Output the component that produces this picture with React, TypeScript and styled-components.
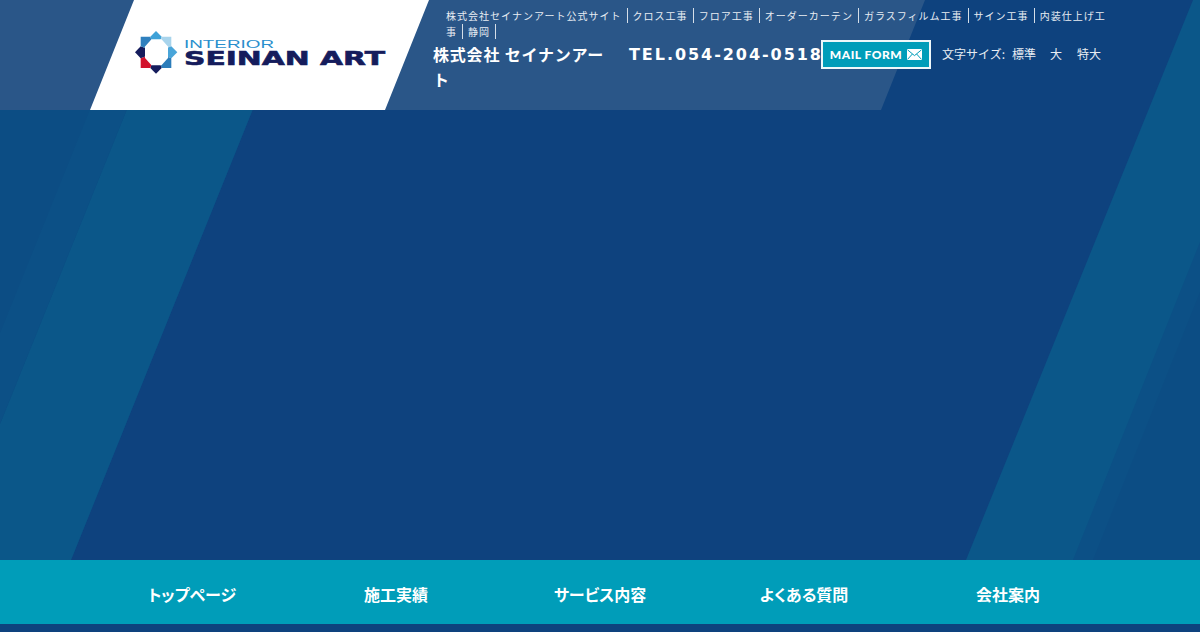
import styled, { createGlobalStyle } from 'styled-components'

const GlobalStyle = createGlobalStyle`
  html, body {
    margin: 0;
    padding: 0;
    background: #0e427e;
  }
  body {
    font-family: "Noto Sans CJK JP", "Noto Sans", sans-serif;
    color: #fff;
  }
`

const Page = styled.div`
  position: relative;
  height: 632px;
  overflow: hidden;
  background: #0e427e;
`
const Backdrop = styled.svg`
  position: absolute;
  top: 0;
  left: 0;
  width: 1200px;
  height: 632px;
`
const Header = styled.header`
  position: relative;
  height: 110px;

  &::before {
    content: '';
    position: absolute;
    inset: 0;
    background: #2a5688;
    clip-path: polygon(0 0, 925px 0, 881px 100%, 0 100%);
  }
`
const HeaderInner = styled.div`
  position: relative;
  display: flex;
  width: 1020px;
  height: 110px;
  margin: 0 auto;
`
const LogoPlate = styled.a`
  flex: 0 0 339px;
  height: 110px;
  background: #fff;
  clip-path: polygon(44px 0, 100% 0, 295px 100%, 0 100%);
`
const HeaderBody = styled.div`
  flex: 1;
  min-width: 0;
  margin-left: 4px;
  padding-top: 8px;
`
const SiteLinks = styled.div`
  height: 32px;
  padding-left: 13px;
  font-size: 10px;
  line-height: 16px;
  letter-spacing: 1.02px;
  color: #e8edf3;
`
const SiteLink = styled.span`
  margin-right: 5px;
  padding-right: 5px;
  border-right: 1px solid #d5dee8;
`
const InfoRow = styled.div`
  display: flex;
  align-items: flex-start;
`
const CompanyName = styled.h1`
  flex: 0 0 176px;
  margin: 2px 20px 0 0;
  font-size: 16px;
  font-weight: 700;
  line-height: 25px;
  letter-spacing: 0.8px;
`
const Tel = styled.div`
  flex: 0 0 192px;
  width: 192px;
  min-width: 0;
  margin-top: 2px;
  font-family: "DejaVu Sans", "Liberation Sans", sans-serif;
  font-size: 16px;
  font-weight: 700;
  line-height: 25px;
  letter-spacing: 1.95px;
  white-space: nowrap;
`
const MailButton = styled.a`
  position: relative;
  flex: 0 0 110px;
  box-sizing: border-box;
  display: flex;
  align-items: center;
  justify-content: center;
  gap: 5px;
  height: 29px;
  border: 2px solid #eef8fa;
  background: #009db9;
  font-family: Lato, "Liberation Sans", sans-serif;
  font-size: 12px;
  font-weight: 900;
  letter-spacing: 0.5px;
  white-space: nowrap;
`
const FontSizes = styled.div`
  display: flex;
  margin-left: 11px;
  font-size: 12px;
  line-height: 28px;
  color: #e8edf3;
  white-space: nowrap;
`
const FontSizeLabel = styled.span`
  margin-right: 7px;
`
const FontSizeOption = styled.span`
  margin-right: 14px;

  &:nth-of-type(3) {
    margin-right: 15px;
  }
`
const Hero = styled.main`
  height: 450px;
`
const GlobalNav = styled.nav`
  position: relative;
  height: 64px;
  background: #009db9;
`
const NavList = styled.ul`
  display: grid;
  grid-template-columns: repeat(5, 204px);
  width: 1020px;
  height: 100%;
  margin: 0 auto;
  padding: 0;
  list-style: none;
`
const NavItem = styled.li`
  display: flex;
  align-items: center;
  justify-content: center;
  padding-top: 3px;
  box-sizing: border-box;
  font-size: 16px;
  font-weight: 700;
  font-feature-settings: "palt";
`

const links = ['株式会社セイナンアート公式サイト', 'クロス工事', 'フロア工事', 'オーダーカーテン', 'ガラスフィルム工事', 'サイン工事', '内装仕上げ工事', '静岡']
const navItems = ['トップページ', '施工実績', 'サービス内容', 'よくある質問', '会社案内']

function BackdropShapes() {
  return (
    <Backdrop viewBox="0 0 1200 632">
      <polygon points="0,0 297,0 71,560 0,560" fill="#0c4d84" />
      <polygon points="0,424 171,0 297,0 71,560 0,560" fill="#0b5789" />
      <polygon points="0,333 134,0 171,0 0,424" fill="#0c5086" />
      <polygon points="1200,0 1200,560 966,560 1193,0" fill="#0b5789" />
      <polygon points="1200,242 1200,560 1073,560" fill="#0c5086" />
      <polygon points="1200,292 1200,560 1093,560" fill="#0c4d84" />
    </Backdrop>
  )
}

function Logo() {
  return (
    <svg width="339" height="110" viewBox="90 0 339 110">
      <polygon points="156,52.3 150.3,36.7 156,31 161.7,36.7" fill="#3fa2d8" />
      <polygon points="156,52.3 161.7,36.7 171.3,36.7 171.3,46.3" fill="#a8d4ec" />
      <polygon points="156,52.3 171.3,46.3 177.3,52.3 171.3,58.3" fill="#49a5d9" />
      <polygon points="156,52.3 171.3,58.3 171.3,68 161.7,68" fill="#2b7cba" />
      <polygon points="156,52.3 161.7,68 156,73.7 150.3,68" fill="#151c5c" />
      <polygon points="156,52.3 150.3,68 140.7,68 140.7,58.3" fill="#d2122c" />
      <polygon points="156,52.3 140.7,58.3 135,52.3 140.7,46.3" fill="#151c5c" />
      <polygon points="156,52.3 140.7,46.3 140.7,36.7 150.3,36.7" fill="#2f80be" />
      <polygon points="151.5,39.3 161.5,39.3 168,46.5 168,58 161.5,65.3 151.5,65.3 145,58 145,46.5" fill="#fff" />
      <text x="184" y="48" textLength="90" lengthAdjust="spacingAndGlyphs" fontFamily="Liberation Sans" fontSize="11" fill="#2a8fcd">
        INTERIOR
      </text>
      <text x="184" y="65" textLength="201" lengthAdjust="spacingAndGlyphs" fontFamily="DejaVu Sans" fontWeight="700" fontSize="19" fill="#151c5c" stroke="#151c5c" strokeWidth="0.6">
        SEINAN ART
      </text>
    </svg>
  )
}

function MailIcon() {
  return (
    <svg width="15" height="11" viewBox="0 0 15 11">
      <rect width="15" height="11" fill="#fff" />
      <path d="M0.5 0.8 L7.5 6.6 L14.5 0.8 M0.5 10.4 L5.4 5 M14.5 10.4 L9.6 5" fill="none" stroke="#009db9" strokeWidth="1" />
    </svg>
  )
}

export default function App() {
  return (
    <Page>
      <GlobalStyle />
      <BackdropShapes />
      <Header>
        <HeaderInner>
          <LogoPlate><Logo /></LogoPlate>
          <HeaderBody>
            <SiteLinks>
              {links.map(link => <SiteLink key={link}>{link}</SiteLink>)}
            </SiteLinks>
            <InfoRow>
              <CompanyName>株式会社 セイナンアート</CompanyName>
              <Tel>TEL.054-204-0518</Tel>
              <MailButton>MAIL FORM <MailIcon /></MailButton>
              <FontSizes>
                <FontSizeLabel>文字サイズ:</FontSizeLabel>
                <FontSizeOption>標準</FontSizeOption>
                <FontSizeOption>大</FontSizeOption>
                <FontSizeOption>特大</FontSizeOption>
              </FontSizes>
            </InfoRow>
          </HeaderBody>
        </HeaderInner>
      </Header>
      <Hero />
      <GlobalNav>
        <NavList>
          {navItems.map(item => <NavItem key={item}>{item}</NavItem>)}
        </NavList>
      </GlobalNav>
    </Page>
  )
}
